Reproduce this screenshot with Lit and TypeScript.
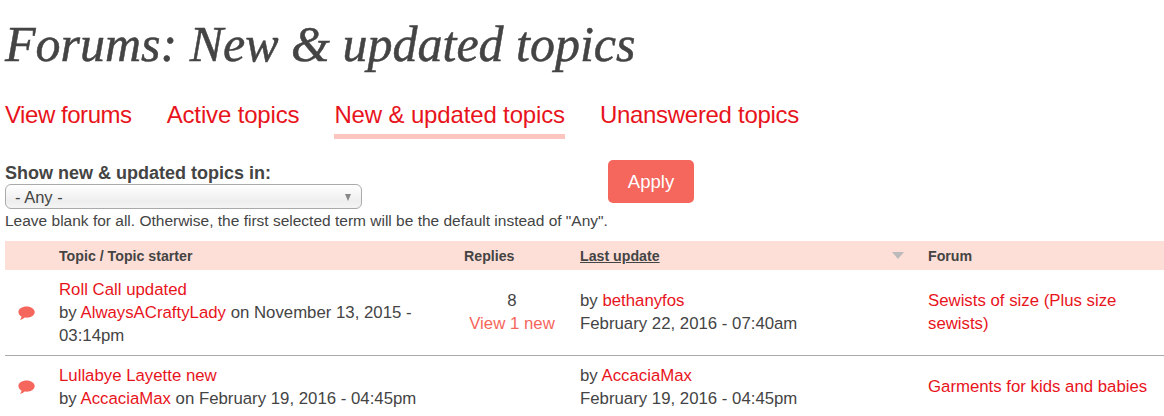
import { LitElement, html, css } from "lit";
import { customElement } from "lit/decorators.js";

const bubble = html`<svg class="bubble" viewBox="0 0 17 15" width="17" height="15" aria-hidden="true"><path d="M8.6 .5C4 .5 .4 2.9 .4 6.1c0 1.9 1.2 3.5 3.2 4.5-.2 1.3-.8 2.4-1.6 3.3 1.9-.3 3.5-1.3 4.7-2.3.6.1 1.2.1 1.9.1 4.5 0 8.1-2.5 8.1-5.6S13.1 .5 8.6 .5z"/></svg>`;

@customElement("app-root")
export class AppRoot extends LitElement {
  static styles = css`
    :host { display: block; height: 416px; overflow: hidden; background: #fff; color: #444; font-family: "Liberation Sans", Arial, sans-serif; font-size: 16.8px; line-height: 23px; }
    a { color: #e8141c; text-decoration: none; }
    .page { padding-left: 5px; }
    h1 { margin: 0; padding-top: 7px; height: 82px; box-sizing: border-box; font-family: "Liberation Serif", serif; font-style: italic; font-weight: 400; font-size: 50px; line-height: 74px; color: #444; white-space: nowrap; -webkit-text-stroke: 0.5px #444; }
    nav { display: flex; gap: 35px; height: 58px; align-items: flex-start; padding-top: 18px; box-sizing: border-box; font-size: 24px; line-height: 30px; }
    nav a { display: block; height: 39px; box-sizing: border-box; letter-spacing: -0.15px; }
    nav a.first { letter-spacing: -0.45px; }
    nav a.last { letter-spacing: -0.3px; }
    nav a.on { border-bottom: 5px solid #fdc5c0; }
    .filter { display: flex; height: 101px; box-sizing: border-box; padding-top: 20px; }
    .field { width: 603px; flex: none; }
    .field label { display: block; box-sizing: border-box; font-weight: 700; font-size: 18px; line-height: 24px; padding-top: 1px; height: 24px; }
    .select { display: flex; align-items: center; justify-content: space-between; width: 357px; height: 25px; box-sizing: border-box; border: 1px solid #aaa; border-radius: 6px; padding: 1px 10px 0 9px; background: linear-gradient(#fff, #eee 70%, #f4f4f4); font-size: 16.5px; }
    .caret { width: 0; height: 0; border-left: 3.5px solid transparent; border-right: 3.5px solid transparent; border-top: 7px solid #888; }
    .help { font-size: 15.5px; line-height: 22px; white-space: nowrap; margin-top: 1px; }
    .apply { width: 86px; height: 43px; border: 0; border-radius: 5px; background: #f5665c; color: #fff; font: 18.5px "Liberation Sans", Arial, sans-serif; }
    table { width: 1159px; table-layout: fixed; border-collapse: collapse; }
    col.c1 { width: 44px; } col.c2 { width: 405px; } col.c3 { width: 116px; } col.c4 { width: 348px; }
    th { height: 29px; padding: 0 10px; background: #fedfd7; text-align: left; font-size: 14.2px; line-height: 18px; font-weight: 700; color: #444; position: relative; }
    th.sorted span { text-decoration: underline; }
    th .arrow { position: absolute; right: 14px; top: 11px; width: 0; height: 0; border-left: 6px solid transparent; border-right: 6px solid transparent; border-top: 7px solid #bbb; }
    td { padding: 8px 10px; vertical-align: middle; }
    td.up { padding-top: 6px; padding-bottom: 8px; }
    tr.first td { border-bottom: 1px solid #aaa; }
    td.icon { padding: 0 0 0 13px; }
    tr.first td.icon { padding-top: 2px; }
    .bubble { display: block; fill: #f5665c; }
    td.replies { text-align: center; }
    a.new { color: #f5665c; }
  `;

  render() {
    return html`<div class="page">
      <h1>Forums: New &amp; updated topics</h1>
      <nav>
        <a href="#" class="first">View forums</a>
        <a href="#">Active topics</a>
        <a href="#" class="on">New &amp; updated topics</a>
        <a href="#" class="last">Unanswered topics</a>
      </nav>
      <div class="filter">
        <div class="field">
          <label>Show new &amp; updated topics in:</label>
          <div class="select"><span>- Any -</span><i class="caret"></i></div>
          <div class="help">Leave blank for all. Otherwise, the first selected term will be the default instead of "Any".</div>
        </div>
        <button class="apply">Apply</button>
      </div>
      <table>
        <colgroup><col class="c1" /><col class="c2" /><col class="c3" /><col class="c4" /><col /></colgroup>
        <thead><tr>
          <th></th><th>Topic / Topic starter</th><th>Replies</th>
          <th class="sorted"><span>Last update</span><i class="arrow"></i></th><th>Forum</th>
        </tr></thead>
        <tbody>
          <tr class="first">
            <td class="icon">${bubble}</td>
            <td><a href="#">Roll Call updated</a><br />by <a href="#">AlwaysACraftyLady</a> on November 13, 2015 - 03:14pm</td>
            <td class="replies up">8<br /><a class="new" href="#">View 1 new</a></td>
            <td class="up">by <a href="#">bethanyfos</a><br />February 22, 2016 - 07:40am</td>
            <td class="up"><a href="#">Sewists of size (Plus size sewists)</a></td>
          </tr>
          <tr>
            <td class="icon">${bubble}</td>
            <td><a href="#">Lullabye Layette new</a><br />by <a href="#">AccaciaMax</a> on February 19, 2016 - 04:45pm</td>
            <td class="replies"></td>
            <td>by <a href="#">AccaciaMax</a><br />February 19, 2016 - 04:45pm</td>
            <td class="up"><a href="#">Garments for kids and babies</a></td>
          </tr>
        </tbody>
      </table>
    </div>`;
  }
}
